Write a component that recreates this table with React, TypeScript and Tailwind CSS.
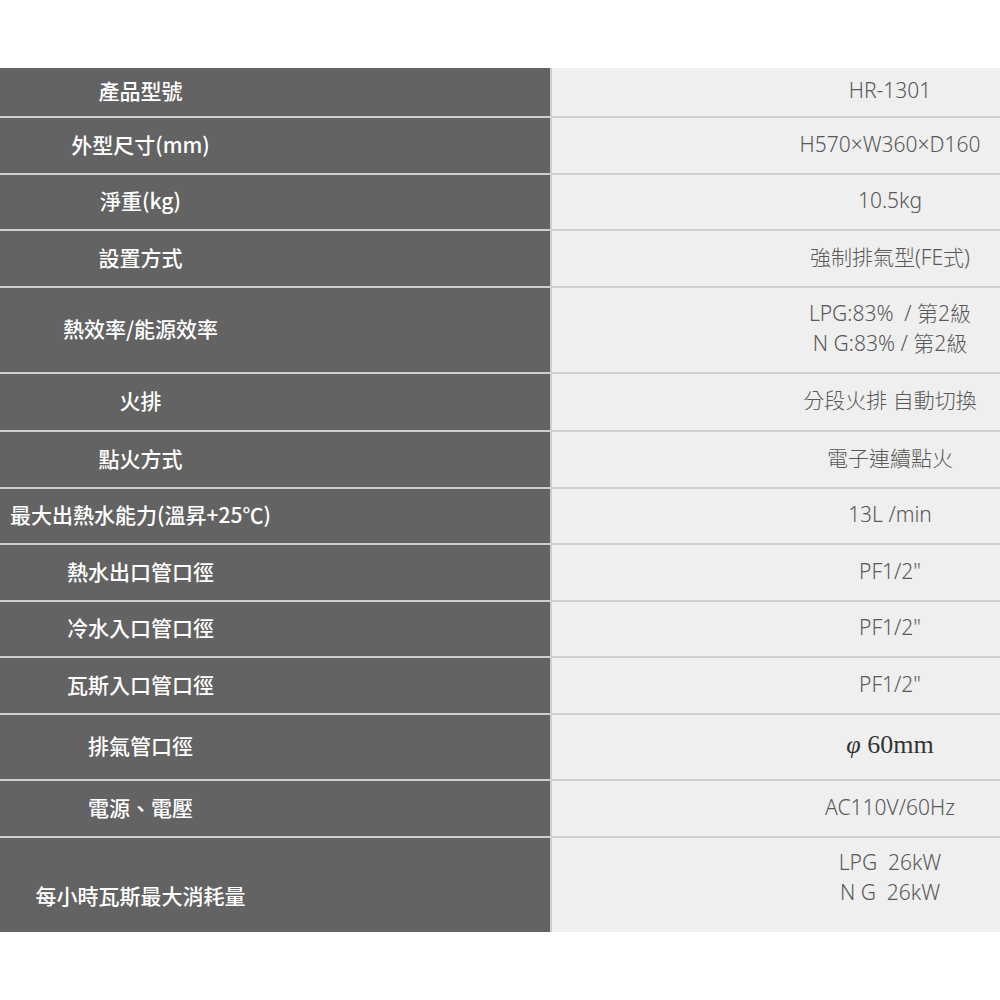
import React from "react";

type Row = { h: string; label: React.ReactNode; value: React.ReactNode };

const rows: Row[] = [
  { h: "h-[48px]", label: "產品型號", value: "HR-1301" },
  { h: "h-[57px]", label: "外型尺寸(mm)", value: "H570×W360×D160" },
  { h: "h-[56px]", label: "淨重(kg)", value: "10.5kg" },
  { h: "h-[57px]", label: "設置方式", value: "強制排氣型(FE式)" },
  {
    h: "h-[86px]",
    label: "熱效率/能源效率",
    value: (
      <>
        <div>LPG:83%&nbsp; / 第2級</div>
        <div>N G:83% / 第2級</div>
      </>
    ),
  },
  { h: "h-[58px]", label: "火排", value: "分段火排 自動切換" },
  { h: "h-[57px]", label: "點火方式", value: "電子連續點火" },
  { h: "h-[56px]", label: "最大出熱水能力(溫昇+25℃)", value: "13L /min" },
  { h: "h-[57px]", label: "熱水出口管口徑", value: 'PF1/2"' },
  { h: "h-[56px]", label: "冷水入口管口徑", value: 'PF1/2"' },
  { h: "h-[57px]", label: "瓦斯入口管口徑", value: 'PF1/2"' },
  {
    h: "h-[66px]",
    label: "排氣管口徑",
    value: (
      <span className="text-[26px] font-normal text-[#333]" style={{ fontFamily: '"Liberation Serif", serif' }}>
        <i>φ</i>&nbsp;60mm
      </span>
    ),
  },
  { h: "h-[57px]", label: "電源、電壓", value: "AC110V/60Hz" },
];

const leftFont = { fontFamily: '"Noto Sans CJK TC", sans-serif' };
const rightFont = { fontFamily: '"Noto Sans", "Noto Sans CJK TC", sans-serif' };

export default function App() {
  return (
    <div className="w-[1000px] h-[1000px] bg-white pt-[68px]">
      <div className="flex flex-col">
        {rows.map((r, i) => (
          <div
            key={i}
            className={`flex ${r.h} ${i > 0 ? "border-t-2 border-[#cfcfcf]" : ""}`}
          >
            <div className="w-[550px] bg-[#636363] flex items-center pb-[4px]">
              <div
                className="w-[281px] text-center text-white text-[21px] font-medium leading-[30px] whitespace-nowrap"
                style={leftFont}
              >
                {r.label}
              </div>
            </div>
            <div className="w-[2px] bg-[#cfcfcf]" />
            <div className="flex-1 bg-[#efefef] flex items-center pb-[4px]">
              <div
                className="ml-[228px] w-[220px] text-center text-[#585858] text-[21px] font-light leading-[30px] whitespace-nowrap"
                style={rightFont}
              >
                {r.value}
              </div>
            </div>
          </div>
        ))}
        <div className="flex h-[96px] border-t-2 border-[#cfcfcf]">
          <div className="w-[550px] bg-[#636363] pt-[42px]">
            <div
              className="w-[281px] text-center text-white text-[21px] font-medium leading-[30px]"
              style={leftFont}
            >
              每小時瓦斯最大消耗量
            </div>
          </div>
          <div className="w-[2px] bg-[#cfcfcf]" />
          <div className="flex-1 bg-[#efefef] pt-[9px]">
            <div
              className="ml-[228px] w-[220px] text-center text-[#585858] text-[21px] font-light leading-[30px]"
              style={rightFont}
            >
              <div>LPG&nbsp; 26kW</div>
              <div>N G&nbsp; 26kW</div>
            </div>
          </div>
        </div>
      </div>
    </div>
  );
}
